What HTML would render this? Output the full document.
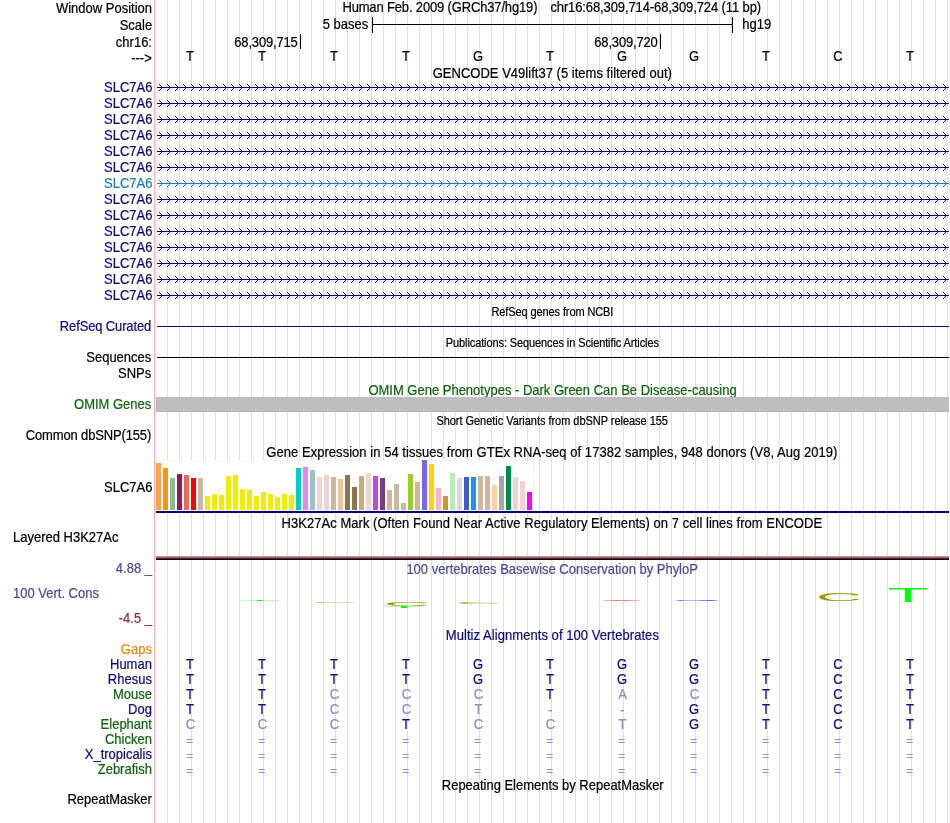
<!DOCTYPE html>
<html><head><meta charset="utf-8"><title>UCSC Genome Browser</title>
<style>
html,body{margin:0;padding:0;background:#fff;}
svg{display:block;will-change:transform;font-family:"Liberation Sans", sans-serif;font-size:13px;}
.l{text-anchor:end;}
.c{text-anchor:middle;}
.s{font-size:11px;}
.g{shape-rendering:crispEdges;}
text{stroke-width:0.2px;}
</style></head><body>
<svg width="950" height="823" viewBox="0 0 950 823">
<rect width="950" height="823" fill="#fff"/>
<g class="g" fill="#dcdcff">
<rect x="167" y="0" width="1" height="823"/>
<rect x="179" y="0" width="1" height="823"/>
<rect x="191" y="0" width="1" height="823"/>
<rect x="203" y="0" width="1" height="823"/>
<rect x="215" y="0" width="1" height="823"/>
<rect x="227" y="0" width="1" height="823"/>
<rect x="239" y="0" width="1" height="823"/>
<rect x="251" y="0" width="1" height="823"/>
<rect x="263" y="0" width="1" height="823"/>
<rect x="275" y="0" width="1" height="823"/>
<rect x="287" y="0" width="1" height="823"/>
<rect x="299" y="0" width="1" height="823"/>
<rect x="311" y="0" width="1" height="823"/>
<rect x="323" y="0" width="1" height="823"/>
<rect x="335" y="0" width="1" height="823"/>
<rect x="347" y="0" width="1" height="823"/>
<rect x="359" y="0" width="1" height="823"/>
<rect x="371" y="0" width="1" height="823"/>
<rect x="383" y="0" width="1" height="823"/>
<rect x="395" y="0" width="1" height="823"/>
<rect x="407" y="0" width="1" height="823"/>
<rect x="419" y="0" width="1" height="823"/>
<rect x="431" y="0" width="1" height="823"/>
<rect x="443" y="0" width="1" height="823"/>
<rect x="455" y="0" width="1" height="823"/>
<rect x="467" y="0" width="1" height="823"/>
<rect x="479" y="0" width="1" height="823"/>
<rect x="491" y="0" width="1" height="823"/>
<rect x="503" y="0" width="1" height="823"/>
<rect x="515" y="0" width="1" height="823"/>
<rect x="527" y="0" width="1" height="823"/>
<rect x="539" y="0" width="1" height="823"/>
<rect x="551" y="0" width="1" height="823"/>
<rect x="563" y="0" width="1" height="823"/>
<rect x="575" y="0" width="1" height="823"/>
<rect x="587" y="0" width="1" height="823"/>
<rect x="599" y="0" width="1" height="823"/>
<rect x="611" y="0" width="1" height="823"/>
<rect x="623" y="0" width="1" height="823"/>
<rect x="635" y="0" width="1" height="823"/>
<rect x="647" y="0" width="1" height="823"/>
<rect x="659" y="0" width="1" height="823"/>
<rect x="671" y="0" width="1" height="823"/>
<rect x="683" y="0" width="1" height="823"/>
<rect x="695" y="0" width="1" height="823"/>
<rect x="707" y="0" width="1" height="823"/>
<rect x="719" y="0" width="1" height="823"/>
<rect x="731" y="0" width="1" height="823"/>
<rect x="743" y="0" width="1" height="823"/>
<rect x="755" y="0" width="1" height="823"/>
<rect x="767" y="0" width="1" height="823"/>
<rect x="779" y="0" width="1" height="823"/>
<rect x="791" y="0" width="1" height="823"/>
<rect x="803" y="0" width="1" height="823"/>
<rect x="815" y="0" width="1" height="823"/>
<rect x="827" y="0" width="1" height="823"/>
<rect x="839" y="0" width="1" height="823"/>
<rect x="851" y="0" width="1" height="823"/>
<rect x="863" y="0" width="1" height="823"/>
<rect x="875" y="0" width="1" height="823"/>
<rect x="887" y="0" width="1" height="823"/>
<rect x="899" y="0" width="1" height="823"/>
<rect x="911" y="0" width="1" height="823"/>
<rect x="923" y="0" width="1" height="823"/>
<rect x="935" y="0" width="1" height="823"/>
<rect x="947" y="0" width="1" height="823"/>
</g>
<rect class="g" x="154" y="0" width="1" height="823" fill="#ffb4b4"/>
<defs><g id="chev"><rect x="-3" y="-3" width="1" height="1"/><rect x="-2" y="-2" width="1" height="1"/><rect x="-1" y="-1" width="1" height="1"/><rect x="-1" y="1" width="1" height="1"/><rect x="-2" y="2" width="1" height="1"/><rect x="-3" y="3" width="1" height="1"/></g>
<g id="generow" class="g"><rect x="157" y="0" width="792" height="1"/><use href="#chev" x="162"/><use href="#chev" x="170"/><use href="#chev" x="178"/><use href="#chev" x="186"/><use href="#chev" x="194"/><use href="#chev" x="202"/><use href="#chev" x="210"/><use href="#chev" x="218"/><use href="#chev" x="226"/><use href="#chev" x="234"/><use href="#chev" x="242"/><use href="#chev" x="250"/><use href="#chev" x="258"/><use href="#chev" x="266"/><use href="#chev" x="274"/><use href="#chev" x="282"/><use href="#chev" x="290"/><use href="#chev" x="298"/><use href="#chev" x="306"/><use href="#chev" x="314"/><use href="#chev" x="322"/><use href="#chev" x="330"/><use href="#chev" x="338"/><use href="#chev" x="346"/><use href="#chev" x="354"/><use href="#chev" x="362"/><use href="#chev" x="370"/><use href="#chev" x="378"/><use href="#chev" x="386"/><use href="#chev" x="394"/><use href="#chev" x="402"/><use href="#chev" x="410"/><use href="#chev" x="418"/><use href="#chev" x="426"/><use href="#chev" x="434"/><use href="#chev" x="442"/><use href="#chev" x="450"/><use href="#chev" x="458"/><use href="#chev" x="466"/><use href="#chev" x="474"/><use href="#chev" x="482"/><use href="#chev" x="490"/><use href="#chev" x="498"/><use href="#chev" x="506"/><use href="#chev" x="514"/><use href="#chev" x="522"/><use href="#chev" x="530"/><use href="#chev" x="538"/><use href="#chev" x="546"/><use href="#chev" x="554"/><use href="#chev" x="562"/><use href="#chev" x="570"/><use href="#chev" x="578"/><use href="#chev" x="586"/><use href="#chev" x="594"/><use href="#chev" x="602"/><use href="#chev" x="610"/><use href="#chev" x="618"/><use href="#chev" x="626"/><use href="#chev" x="634"/><use href="#chev" x="642"/><use href="#chev" x="650"/><use href="#chev" x="658"/><use href="#chev" x="666"/><use href="#chev" x="674"/><use href="#chev" x="682"/><use href="#chev" x="690"/><use href="#chev" x="698"/><use href="#chev" x="706"/><use href="#chev" x="714"/><use href="#chev" x="722"/><use href="#chev" x="730"/><use href="#chev" x="738"/><use href="#chev" x="746"/><use href="#chev" x="754"/><use href="#chev" x="762"/><use href="#chev" x="770"/><use href="#chev" x="778"/><use href="#chev" x="786"/><use href="#chev" x="794"/><use href="#chev" x="802"/><use href="#chev" x="810"/><use href="#chev" x="818"/><use href="#chev" x="826"/><use href="#chev" x="834"/><use href="#chev" x="842"/><use href="#chev" x="850"/><use href="#chev" x="858"/><use href="#chev" x="866"/><use href="#chev" x="874"/><use href="#chev" x="882"/><use href="#chev" x="890"/><use href="#chev" x="898"/><use href="#chev" x="906"/><use href="#chev" x="914"/><use href="#chev" x="922"/><use href="#chev" x="930"/><use href="#chev" x="938"/><use href="#chev" x="946"/></g></defs>
<g class="g" fill="#000"><rect x="372" y="24" width="361" height="1"/><rect x="372" y="17" width="1" height="16"/><rect x="732" y="17" width="1" height="16"/></g>
<rect class="g" x="300" y="34" width="1" height="15"/>
<rect class="g" x="660" y="34" width="1" height="15"/>
<use href="#generow" y="87" fill="#0c0c78"/>
<use href="#generow" y="103" fill="#0c0c78"/>
<use href="#generow" y="119" fill="#0c0c78"/>
<use href="#generow" y="135" fill="#0c0c78"/>
<use href="#generow" y="151" fill="#0c0c78"/>
<use href="#generow" y="167" fill="#0c0c78"/>
<use href="#generow" y="183" fill="#1c7cbc"/>
<use href="#generow" y="199" fill="#0c0c78"/>
<use href="#generow" y="215" fill="#0c0c78"/>
<use href="#generow" y="231" fill="#0c0c78"/>
<use href="#generow" y="247" fill="#0c0c78"/>
<use href="#generow" y="263" fill="#0c0c78"/>
<use href="#generow" y="279" fill="#0c0c78"/>
<use href="#generow" y="295" fill="#0c0c78"/>
<rect class="g" x="157" y="326" width="792" height="1" fill="#0c0c78"/>
<rect class="g" x="157" y="357" width="792" height="1" fill="#000"/>
<g transform="scale(1 1.1)"><text class="" x="368.4" y="359.09" fill="#0e640e" stroke="#0e640e" textLength="368.3">OMIM Gene Phenotypes - Dark Green Can Be Disease-causing</text></g>
<g class="g"><rect x="156" y="397" width="793" height="15" fill="#b6b6b6"/><rect x="157" y="397" width="792" height="14" fill="#bebebe"/></g>
<g class="g">
<rect x="156" y="460" width="378" height="51" fill="#f4f4f4"/><rect x="157" y="461" width="376" height="49" fill="#fff"/>
<rect x="156" y="463" width="5" height="47" fill="#FFA54F"/>
<rect x="163" y="468" width="5" height="42" fill="#EE9A00"/>
<rect x="170" y="478" width="5" height="32" fill="#8FBC8F"/>
<rect x="177" y="474" width="5" height="36" fill="#8B1C62"/>
<rect x="184" y="475" width="5" height="35" fill="#EE6A50"/>
<rect x="191" y="478" width="5" height="32" fill="#FF0000"/>
<rect x="198" y="478" width="5" height="32" fill="#CDB79E"/>
<rect x="205" y="496" width="5" height="14" fill="#EEEE00"/>
<rect x="212" y="494" width="5" height="16" fill="#EEEE00"/>
<rect x="219" y="495" width="5" height="15" fill="#EEEE00"/>
<rect x="226" y="476" width="5" height="34" fill="#EEEE00"/>
<rect x="233" y="475" width="5" height="35" fill="#EEEE00"/>
<rect x="240" y="489" width="5" height="21" fill="#EEEE00"/>
<rect x="247" y="490" width="5" height="20" fill="#EEEE00"/>
<rect x="254" y="496" width="5" height="14" fill="#EEEE00"/>
<rect x="261" y="492" width="5" height="18" fill="#EEEE00"/>
<rect x="268" y="494" width="5" height="16" fill="#EEEE00"/>
<rect x="275" y="497" width="5" height="13" fill="#EEEE00"/>
<rect x="282" y="494" width="5" height="16" fill="#EEEE00"/>
<rect x="289" y="495" width="5" height="15" fill="#EEEE00"/>
<rect x="296" y="468" width="5" height="42" fill="#00CDCD"/>
<rect x="303" y="467" width="5" height="43" fill="#EE82EE"/>
<rect x="310" y="470" width="5" height="40" fill="#9AC0CD"/>
<rect x="317" y="477" width="5" height="33" fill="#EED5D2"/>
<rect x="324" y="475" width="5" height="35" fill="#EED5D2"/>
<rect x="331" y="477" width="5" height="33" fill="#CDB79E"/>
<rect x="338" y="479" width="5" height="31" fill="#EEC591"/>
<rect x="345" y="475" width="5" height="35" fill="#8B7355"/>
<rect x="352" y="487" width="5" height="23" fill="#8B7355"/>
<rect x="359" y="476" width="5" height="34" fill="#CDAA7D"/>
<rect x="366" y="473" width="5" height="37" fill="#EED5D2"/>
<rect x="373" y="476" width="5" height="34" fill="#B452CD"/>
<rect x="380" y="478" width="5" height="32" fill="#7A378B"/>
<rect x="387" y="490" width="5" height="20" fill="#CDB79E"/>
<rect x="394" y="484" width="5" height="26" fill="#CDB79E"/>
<rect x="401" y="503" width="5" height="7" fill="#CDB79E"/>
<rect x="408" y="474" width="5" height="36" fill="#9ACD32"/>
<rect x="415" y="482" width="5" height="28" fill="#CDB79E"/>
<rect x="422" y="460" width="5" height="50" fill="#7A67EE"/>
<rect x="429" y="464" width="5" height="46" fill="#FFD700"/>
<rect x="436" y="488" width="5" height="22" fill="#FFB6C1"/>
<rect x="443" y="496" width="5" height="14" fill="#CD9B1D"/>
<rect x="450" y="473" width="5" height="37" fill="#B4EEB4"/>
<rect x="457" y="478" width="5" height="32" fill="#D9D9D9"/>
<rect x="464" y="477" width="5" height="33" fill="#3A5FCD"/>
<rect x="471" y="477" width="5" height="33" fill="#1E90FF"/>
<rect x="478" y="476" width="5" height="34" fill="#CDB79E"/>
<rect x="485" y="476" width="5" height="34" fill="#CDB79E"/>
<rect x="492" y="485" width="5" height="25" fill="#FFD39B"/>
<rect x="499" y="476" width="5" height="34" fill="#A6A6A6"/>
<rect x="506" y="466" width="5" height="44" fill="#008B45"/>
<rect x="513" y="477" width="5" height="33" fill="#EED5D2"/>
<rect x="520" y="481" width="5" height="29" fill="#EED5D2"/>
<rect x="527" y="492" width="5" height="18" fill="#FF00FF"/>
<rect x="156" y="511" width="793" height="2" fill="#00007a"/>
</g>
<g class="g"><rect x="156" y="556" width="793" height="1" fill="#ff8080"/><rect x="156" y="557" width="793" height="1" fill="#78786a"/><rect x="156" y="558" width="793" height="1" fill="#5a2020"/><rect x="156" y="559" width="793" height="1" fill="#0a0020"/></g>
<text transform="translate(887.49 602.00) scale(6.721 2.035)" font-size="10" text-rendering="geometricPrecision" fill="#00ff00">T</text>
<text transform="translate(815.71 600.89) scale(6.474 1.130)" font-size="10" text-rendering="geometricPrecision" fill="#9c9c00">C</text>
<text transform="translate(383.71 605.94) scale(6.474 0.565)" font-size="10" text-rendering="geometricPrecision" fill="#9c9c00">C</text>
<text transform="translate(383.49 608.00) scale(6.721 0.291)" font-size="10" text-rendering="geometricPrecision" fill="#00ff00">T</text>
<text transform="translate(239.49 601.00) scale(6.721 0.145)" font-size="10" text-rendering="geometricPrecision" fill="#00ff00">T</text>
<text transform="translate(311.71 602.99) scale(6.474 0.141)" font-size="10" text-rendering="geometricPrecision" fill="#9c9c00">C</text>
<text transform="translate(455.71 603.97) scale(6.474 0.282)" font-size="10" text-rendering="geometricPrecision" fill="#9c9c00">C</text>
<text transform="translate(600.88 601.00) scale(6.183 0.145)" font-size="10" text-rendering="geometricPrecision" fill="#ff0000">A</text>
<text transform="translate(671.69 600.99) scale(6.587 0.141)" font-size="10" text-rendering="geometricPrecision" fill="#0000ff">G</text>
<text class="c" x="189.8" y="744.95" font-size="12" fill="#8e8ec4">=</text>
<text class="c" x="261.8" y="744.95" font-size="12" fill="#8e8ec4">=</text>
<text class="c" x="333.8" y="744.95" font-size="12" fill="#8e8ec4">=</text>
<text class="c" x="405.8" y="744.95" font-size="12" fill="#8e8ec4">=</text>
<text class="c" x="477.8" y="744.95" font-size="12" fill="#8e8ec4">=</text>
<text class="c" x="549.8" y="744.95" font-size="12" fill="#8e8ec4">=</text>
<text class="c" x="621.8" y="744.95" font-size="12" fill="#8e8ec4">=</text>
<text class="c" x="693.8" y="744.95" font-size="12" fill="#8e8ec4">=</text>
<text class="c" x="765.8" y="744.95" font-size="12" fill="#8e8ec4">=</text>
<text class="c" x="837.8" y="744.95" font-size="12" fill="#8e8ec4">=</text>
<text class="c" x="909.8" y="744.95" font-size="12" fill="#8e8ec4">=</text>
<text class="c" x="189.8" y="759.95" font-size="12" fill="#8e8ec4">=</text>
<text class="c" x="261.8" y="759.95" font-size="12" fill="#8e8ec4">=</text>
<text class="c" x="333.8" y="759.95" font-size="12" fill="#8e8ec4">=</text>
<text class="c" x="405.8" y="759.95" font-size="12" fill="#8e8ec4">=</text>
<text class="c" x="477.8" y="759.95" font-size="12" fill="#8e8ec4">=</text>
<text class="c" x="549.8" y="759.95" font-size="12" fill="#8e8ec4">=</text>
<text class="c" x="621.8" y="759.95" font-size="12" fill="#8e8ec4">=</text>
<text class="c" x="693.8" y="759.95" font-size="12" fill="#8e8ec4">=</text>
<text class="c" x="765.8" y="759.95" font-size="12" fill="#8e8ec4">=</text>
<text class="c" x="837.8" y="759.95" font-size="12" fill="#8e8ec4">=</text>
<text class="c" x="909.8" y="759.95" font-size="12" fill="#8e8ec4">=</text>
<text class="c" x="189.8" y="774.95" font-size="12" fill="#8e8ec4">=</text>
<text class="c" x="261.8" y="774.95" font-size="12" fill="#8e8ec4">=</text>
<text class="c" x="333.8" y="774.95" font-size="12" fill="#8e8ec4">=</text>
<text class="c" x="405.8" y="774.95" font-size="12" fill="#8e8ec4">=</text>
<text class="c" x="477.8" y="774.95" font-size="12" fill="#8e8ec4">=</text>
<text class="c" x="549.8" y="774.95" font-size="12" fill="#8e8ec4">=</text>
<text class="c" x="621.8" y="774.95" font-size="12" fill="#8e8ec4">=</text>
<text class="c" x="693.8" y="774.95" font-size="12" fill="#8e8ec4">=</text>
<text class="c" x="765.8" y="774.95" font-size="12" fill="#8e8ec4">=</text>
<text class="c" x="837.8" y="774.95" font-size="12" fill="#8e8ec4">=</text>
<text class="c" x="909.8" y="774.95" font-size="12" fill="#8e8ec4">=</text>
<g transform="scale(1 1.1)">
<text class="l" x="152" y="11.82" fill="#000" stroke="#000">Window Position</text>
<text class="l" x="152.2" y="27.27" fill="#000" stroke="#000">Scale</text>
<text class="l" x="152" y="42.73" fill="#000" stroke="#000">chr16:</text>
<text class="l" x="151.8" y="57.27" fill="#000" stroke="#000">---&gt;</text>
<text class="" x="342.4" y="10.91" fill="#000" stroke="#000" textLength="195.1">Human Feb. 2009 (GRCh37/hg19)</text>
<text class="" x="550.4" y="10.91" fill="#000" stroke="#000" textLength="210.7">chr16:68,309,714-68,309,724 (11 bp)</text>
<text class="l" x="368.3" y="26.73" fill="#000" stroke="#000">5 bases</text>
<text class="" x="742.3" y="26.73" fill="#000" stroke="#000">hg19</text>
<text class="l" x="297.8" y="42.73" fill="#000" stroke="#000" textLength="63.5">68,309,715</text>
<text class="l" x="657.8" y="42.73" fill="#000" stroke="#000" textLength="63.5">68,309,720</text>
<text class="c" x="190" y="55.45" fill="#000" stroke="#000">T</text>
<text class="c" x="262" y="55.45" fill="#000" stroke="#000">T</text>
<text class="c" x="334" y="55.45" fill="#000" stroke="#000">T</text>
<text class="c" x="406" y="55.45" fill="#000" stroke="#000">T</text>
<text class="c" x="478" y="55.45" fill="#000" stroke="#000">G</text>
<text class="c" x="550" y="55.45" fill="#000" stroke="#000">T</text>
<text class="c" x="622" y="55.45" fill="#000" stroke="#000">G</text>
<text class="c" x="694" y="55.45" fill="#000" stroke="#000">G</text>
<text class="c" x="766" y="55.45" fill="#000" stroke="#000">T</text>
<text class="c" x="838" y="55.45" fill="#000" stroke="#000">C</text>
<text class="c" x="910" y="55.45" fill="#000" stroke="#000">T</text>
<text class="" x="432.7" y="70.91" fill="#000" stroke="#000" textLength="239.2">GENCODE V49lift37 (5 items filtered out)</text>
<text class="l" x="152.4" y="83.64" fill="#0c0c78" stroke="#0c0c78">SLC7A6</text>
<text class="l" x="152.4" y="98.18" fill="#0c0c78" stroke="#0c0c78">SLC7A6</text>
<text class="l" x="152.4" y="112.73" fill="#0c0c78" stroke="#0c0c78">SLC7A6</text>
<text class="l" x="152.4" y="127.27" fill="#0c0c78" stroke="#0c0c78">SLC7A6</text>
<text class="l" x="152.4" y="141.82" fill="#0c0c78" stroke="#0c0c78">SLC7A6</text>
<text class="l" x="152.4" y="156.36" fill="#0c0c78" stroke="#0c0c78">SLC7A6</text>
<text class="l" x="152.4" y="170.91" fill="#1c7cbc" stroke="#1c7cbc">SLC7A6</text>
<text class="l" x="152.4" y="185.45" fill="#0c0c78" stroke="#0c0c78">SLC7A6</text>
<text class="l" x="152.4" y="200.00" fill="#0c0c78" stroke="#0c0c78">SLC7A6</text>
<text class="l" x="152.4" y="214.55" fill="#0c0c78" stroke="#0c0c78">SLC7A6</text>
<text class="l" x="152.4" y="229.09" fill="#0c0c78" stroke="#0c0c78">SLC7A6</text>
<text class="l" x="152.4" y="243.64" fill="#0c0c78" stroke="#0c0c78">SLC7A6</text>
<text class="l" x="152.4" y="258.18" fill="#0c0c78" stroke="#0c0c78">SLC7A6</text>
<text class="l" x="152.4" y="272.73" fill="#0c0c78" stroke="#0c0c78">SLC7A6</text>
<text class="s" x="491.5" y="287.27" fill="#000" stroke="#000" textLength="121.9">RefSeq genes from NCBI</text>
<text class="l" x="151.3" y="300.91" fill="#0c0c78" stroke="#0c0c78" textLength="91.5">RefSeq Curated</text>
<text class="s" x="445.8" y="315.45" fill="#000" stroke="#000" textLength="213.1">Publications: Sequences in Scientific Articles</text>
<text class="l" x="151.3" y="329.09" fill="#000" stroke="#000">Sequences</text>
<text class="l" x="151.3" y="343.64" fill="#000" stroke="#000">SNPs</text>
<text class="l" x="151.3" y="371.82" fill="#0e640e" stroke="#0e640e">OMIM Genes</text>
<text class="s" x="436.4" y="386.36" fill="#000" stroke="#000" textLength="231.5">Short Genetic Variants from dbSNP release 155</text>
<text class="l" x="151.3" y="400.00" fill="#000" stroke="#000" textLength="125.5">Common dbSNP(155)</text>
<text class="" x="266.3" y="415.45" fill="#000" stroke="#000" textLength="571.1">Gene Expression in 54 tissues from GTEx RNA-seq of 17382 samples, 948 donors (V8, Aug 2019)</text>
<text class="l" x="152.4" y="447.27" fill="#000" stroke="#000">SLC7A6</text>
<text class="" x="281.6" y="480.00" fill="#000" stroke="#000" textLength="540.5">H3K27Ac Mark (Often Found Near Active Regulatory Elements) on 7 cell lines from ENCODE</text>
<text class="" x="13" y="492.73" fill="#000" stroke="#000">Layered H3K27Ac</text>
<text class="" x="406.4" y="521.82" fill="#4a4a9a" stroke="#4a4a9a" textLength="291.5">100 vertebrates Basewise Conservation by PhyloP</text>
<text class="l" x="152" y="521.27" fill="#4a4a9a" stroke="#4a4a9a">4.88 _</text>
<text class="" x="13" y="543.64" fill="#4a4a9a" stroke="#4a4a9a">100 Vert. Cons</text>
<text class="l" x="152" y="566.73" fill="#8b3030" stroke="#8b3030">-4.5 _</text>
<text class="" x="445.8" y="581.82" fill="#0c0c78" stroke="#0c0c78" textLength="213.1">Multiz Alignments of 100 Vertebrates</text>
<text class="l" x="151.9" y="594.82" fill="#e88a10" stroke="#e88a10">Gaps</text>
<text class="l" x="151.9" y="608.45" fill="#0c0c78" stroke="#0c0c78">Human</text>
<text class="c" x="190" y="608.18" fill="#0c0c78" stroke="#0c0c78">T</text>
<text class="c" x="262" y="608.18" fill="#0c0c78" stroke="#0c0c78">T</text>
<text class="c" x="334" y="608.18" fill="#0c0c78" stroke="#0c0c78">T</text>
<text class="c" x="406" y="608.18" fill="#0c0c78" stroke="#0c0c78">T</text>
<text class="c" x="478" y="608.18" fill="#0c0c78" stroke="#0c0c78">G</text>
<text class="c" x="550" y="608.18" fill="#0c0c78" stroke="#0c0c78">T</text>
<text class="c" x="622" y="608.18" fill="#0c0c78" stroke="#0c0c78">G</text>
<text class="c" x="694" y="608.18" fill="#0c0c78" stroke="#0c0c78">G</text>
<text class="c" x="766" y="608.18" fill="#0c0c78" stroke="#0c0c78">T</text>
<text class="c" x="838" y="608.18" fill="#0c0c78" stroke="#0c0c78">C</text>
<text class="c" x="910" y="608.18" fill="#0c0c78" stroke="#0c0c78">T</text>
<text class="l" x="151.9" y="622.09" fill="#0c0c78" stroke="#0c0c78">Rhesus</text>
<text class="c" x="190" y="621.82" fill="#0c0c78" stroke="#0c0c78">T</text>
<text class="c" x="262" y="621.82" fill="#0c0c78" stroke="#0c0c78">T</text>
<text class="c" x="334" y="621.82" fill="#0c0c78" stroke="#0c0c78">T</text>
<text class="c" x="406" y="621.82" fill="#0c0c78" stroke="#0c0c78">T</text>
<text class="c" x="478" y="621.82" fill="#0c0c78" stroke="#0c0c78">G</text>
<text class="c" x="550" y="621.82" fill="#0c0c78" stroke="#0c0c78">T</text>
<text class="c" x="622" y="621.82" fill="#0c0c78" stroke="#0c0c78">G</text>
<text class="c" x="694" y="621.82" fill="#0c0c78" stroke="#0c0c78">G</text>
<text class="c" x="766" y="621.82" fill="#0c0c78" stroke="#0c0c78">T</text>
<text class="c" x="838" y="621.82" fill="#0c0c78" stroke="#0c0c78">C</text>
<text class="c" x="910" y="621.82" fill="#0c0c78" stroke="#0c0c78">T</text>
<text class="l" x="151.9" y="635.73" fill="#0e640e" stroke="#0e640e">Mouse</text>
<text class="c" x="190" y="635.45" fill="#0c0c78" stroke="#0c0c78">T</text>
<text class="c" x="262" y="635.45" fill="#0c0c78" stroke="#0c0c78">T</text>
<text class="c" x="334.5" y="635.45" fill="#8e8ec4" stroke="#8e8ec4">C</text>
<text class="c" x="406.5" y="635.45" fill="#8e8ec4" stroke="#8e8ec4">C</text>
<text class="c" x="478.5" y="635.45" fill="#8e8ec4" stroke="#8e8ec4">C</text>
<text class="c" x="550" y="635.45" fill="#0c0c78" stroke="#0c0c78">T</text>
<text class="c" x="622.5" y="635.45" fill="#8e8ec4" stroke="#8e8ec4">A</text>
<text class="c" x="694.5" y="635.45" fill="#8e8ec4" stroke="#8e8ec4">C</text>
<text class="c" x="766" y="635.45" fill="#0c0c78" stroke="#0c0c78">T</text>
<text class="c" x="838" y="635.45" fill="#0c0c78" stroke="#0c0c78">C</text>
<text class="c" x="910" y="635.45" fill="#0c0c78" stroke="#0c0c78">T</text>
<text class="l" x="151.9" y="649.36" fill="#0c0c78" stroke="#0c0c78">Dog</text>
<text class="c" x="190" y="649.09" fill="#0c0c78" stroke="#0c0c78">T</text>
<text class="c" x="262" y="649.09" fill="#0c0c78" stroke="#0c0c78">T</text>
<text class="c" x="334.5" y="649.09" fill="#8e8ec4" stroke="#8e8ec4">C</text>
<text class="c" x="406.5" y="649.09" fill="#8e8ec4" stroke="#8e8ec4">C</text>
<text class="c" x="478.5" y="649.09" fill="#8e8ec4" stroke="#8e8ec4">T</text>
<text class="c" x="550.5" y="650.00" fill="#8e8ec4" stroke="#8e8ec4">-</text>
<text class="c" x="622.5" y="650.00" fill="#8e8ec4" stroke="#8e8ec4">-</text>
<text class="c" x="694" y="649.09" fill="#0c0c78" stroke="#0c0c78">G</text>
<text class="c" x="766" y="649.09" fill="#0c0c78" stroke="#0c0c78">T</text>
<text class="c" x="838" y="649.09" fill="#0c0c78" stroke="#0c0c78">C</text>
<text class="c" x="910" y="649.09" fill="#0c0c78" stroke="#0c0c78">T</text>
<text class="l" x="151.9" y="663.00" fill="#0e640e" stroke="#0e640e">Elephant</text>
<text class="c" x="190.5" y="662.73" fill="#8e8ec4" stroke="#8e8ec4">C</text>
<text class="c" x="262.5" y="662.73" fill="#8e8ec4" stroke="#8e8ec4">C</text>
<text class="c" x="334.5" y="662.73" fill="#8e8ec4" stroke="#8e8ec4">C</text>
<text class="c" x="406" y="662.73" fill="#0c0c78" stroke="#0c0c78">T</text>
<text class="c" x="478.5" y="662.73" fill="#8e8ec4" stroke="#8e8ec4">C</text>
<text class="c" x="550.5" y="662.73" fill="#8e8ec4" stroke="#8e8ec4">C</text>
<text class="c" x="622.5" y="662.73" fill="#8e8ec4" stroke="#8e8ec4">T</text>
<text class="c" x="694" y="662.73" fill="#0c0c78" stroke="#0c0c78">G</text>
<text class="c" x="766" y="662.73" fill="#0c0c78" stroke="#0c0c78">T</text>
<text class="c" x="838" y="662.73" fill="#0c0c78" stroke="#0c0c78">C</text>
<text class="c" x="910" y="662.73" fill="#0c0c78" stroke="#0c0c78">T</text>
<text class="l" x="151.9" y="676.64" fill="#0e640e" stroke="#0e640e">Chicken</text>
<text class="l" x="151.9" y="690.27" fill="#0c0c78" stroke="#0c0c78">X_tropicalis</text>
<text class="l" x="151.9" y="703.91" fill="#0e640e" stroke="#0e640e">Zebrafish</text>
<text class="" x="441.8" y="718.18" fill="#000" stroke="#000" textLength="221.9">Repeating Elements by RepeatMasker</text>
<text class="l" x="151.9" y="731.18" fill="#000" stroke="#000">RepeatMasker</text>
</g>
</svg></body></html>
